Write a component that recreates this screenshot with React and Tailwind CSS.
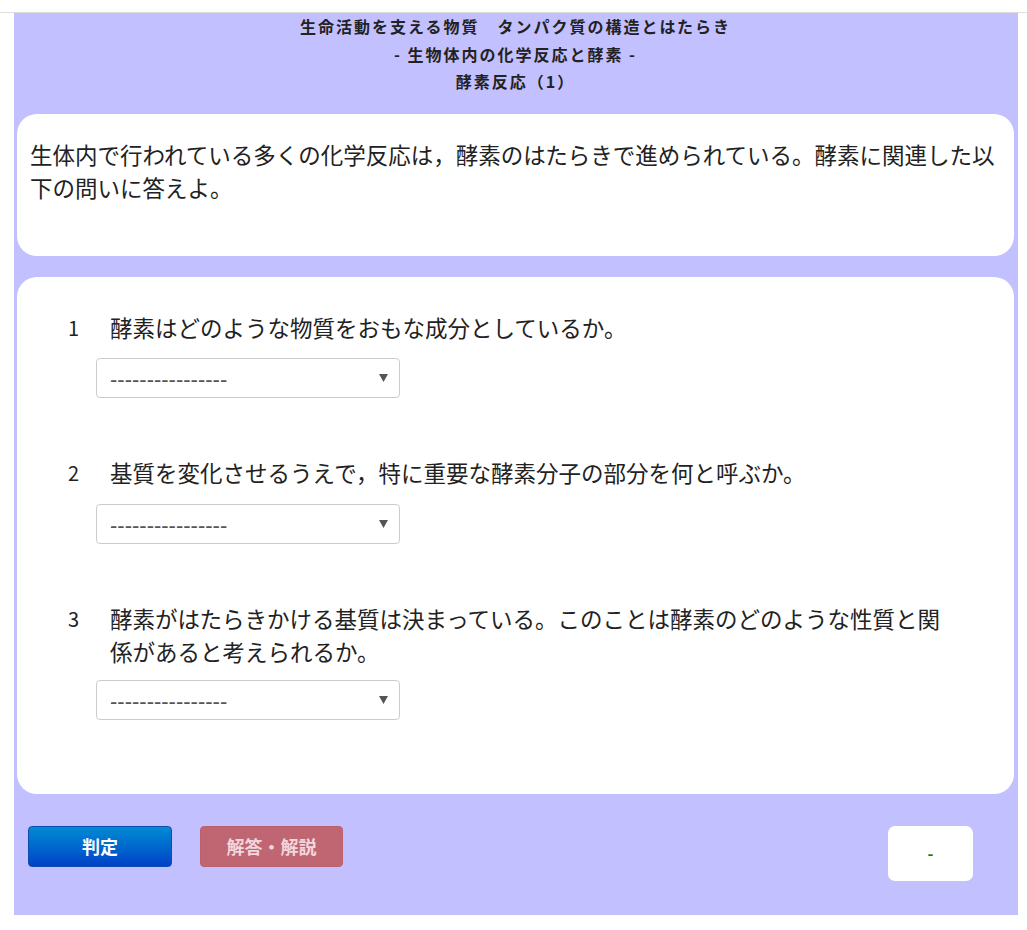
import React from 'react';

const questions = [
  { no: '1', text: '酵素はどのような物質をおもな成分としているか。' },
  { no: '2', text: '基質を変化させるうえで，特に重要な酵素分子の部分を何と呼ぶか。' },
  { no: '3', text: '酵素がはたらきかける基質は決まっている。このことは酵素のどのような性質と関係があると考えられるか。' },
];

function SelectBox() {
  return (
    <div className="w-[304px] h-[40px] border border-[#cccccc] rounded-[4px] bg-white flex items-center justify-between pl-[13px] pr-[11px]">
      <span className="text-[22px] text-[#555] leading-none pt-[4px]" style={{ fontFamily: '"Liberation Sans", Arial, sans-serif' }}>
        ----------------
      </span>
      <svg width="9" height="8" viewBox="0 0 9 8">
        <polygon points="0,0 9,0 4.5,8" fill="#555555" />
      </svg>
    </div>
  );
}

export default function App() {
  return (
    <div className="min-h-[930px] bg-white text-[#222]" style={{ fontFamily: '"Noto Sans CJK JP", "Noto Sans", sans-serif' }}>
      <div className="h-[13px] border-b border-[#dddddd]" />

      <div className="ml-[14px] w-[1004px] bg-[#c2c0ff] pl-[3px] pr-[4px] pb-[34px]">
        {/* header */}
        <div className="text-center font-bold text-[16px] tracking-[2px] leading-[27.5px] text-[#222]">
          <div>生命活動を支える物質　タンパク質の構造とはたらき</div>
          <div>- 生物体内の化学反応と酵素 -</div>
          <div>酵素反応（1）</div>
        </div>

        {/* intro */}
        <div className="mt-[18px] bg-white rounded-[20px] px-[13px] pt-[24px] pb-[52px] text-[22.5px] leading-[33px]">
          生体内で行われている多くの化学反応は，酵素のはたらきで進められている。酵素に関連した以下の問いに答えよ。
        </div>

        {/* questions */}
        <div className="mt-[21px] bg-white rounded-[20px] pt-[34px] pb-[74px]">
          {questions.map((q, i) => (
            <div key={q.no} className={i === 0 ? '' : i === 1 ? 'mt-[58px]' : 'mt-[58px]'}>
              <div className="flex text-[22.5px] leading-[33px]">
                <span className="w-[42px] pl-[51px] box-content shrink-0 text-[20px]">{q.no}</span>
                <span className="w-[850px]">{q.text}</span>
              </div>
              <div className={`ml-[79px] ${i === 2 ? 'mt-[12px]' : i === 1 ? 'mt-[15px]' : 'mt-[14px]'}`}>
                <SelectBox />
              </div>
            </div>
          ))}
        </div>

        {/* buttons */}
        <div className="mt-[32px] flex items-start">
          <button className="ml-[11px] w-[144px] h-[41px] rounded-[4px] bg-gradient-to-b from-[#0a8ad2] to-[#0040c8] border border-[#0a4fb0] text-white font-bold text-[18px]">
            判定
          </button>
          <button className="ml-[28px] w-[143px] h-[41px] rounded-[4px] bg-[#c06673] border border-[#b86270] text-[#f2d6dc] font-bold text-[18px]">
            解答・解説
          </button>
          <div className="ml-auto mr-[41px] w-[85px] h-[55px] rounded-[7px] bg-white flex items-center justify-center">
            <span className="text-[#008800] text-[16px] font-bold leading-none">-</span>
          </div>
        </div>
      </div>
    </div>
  );
}
